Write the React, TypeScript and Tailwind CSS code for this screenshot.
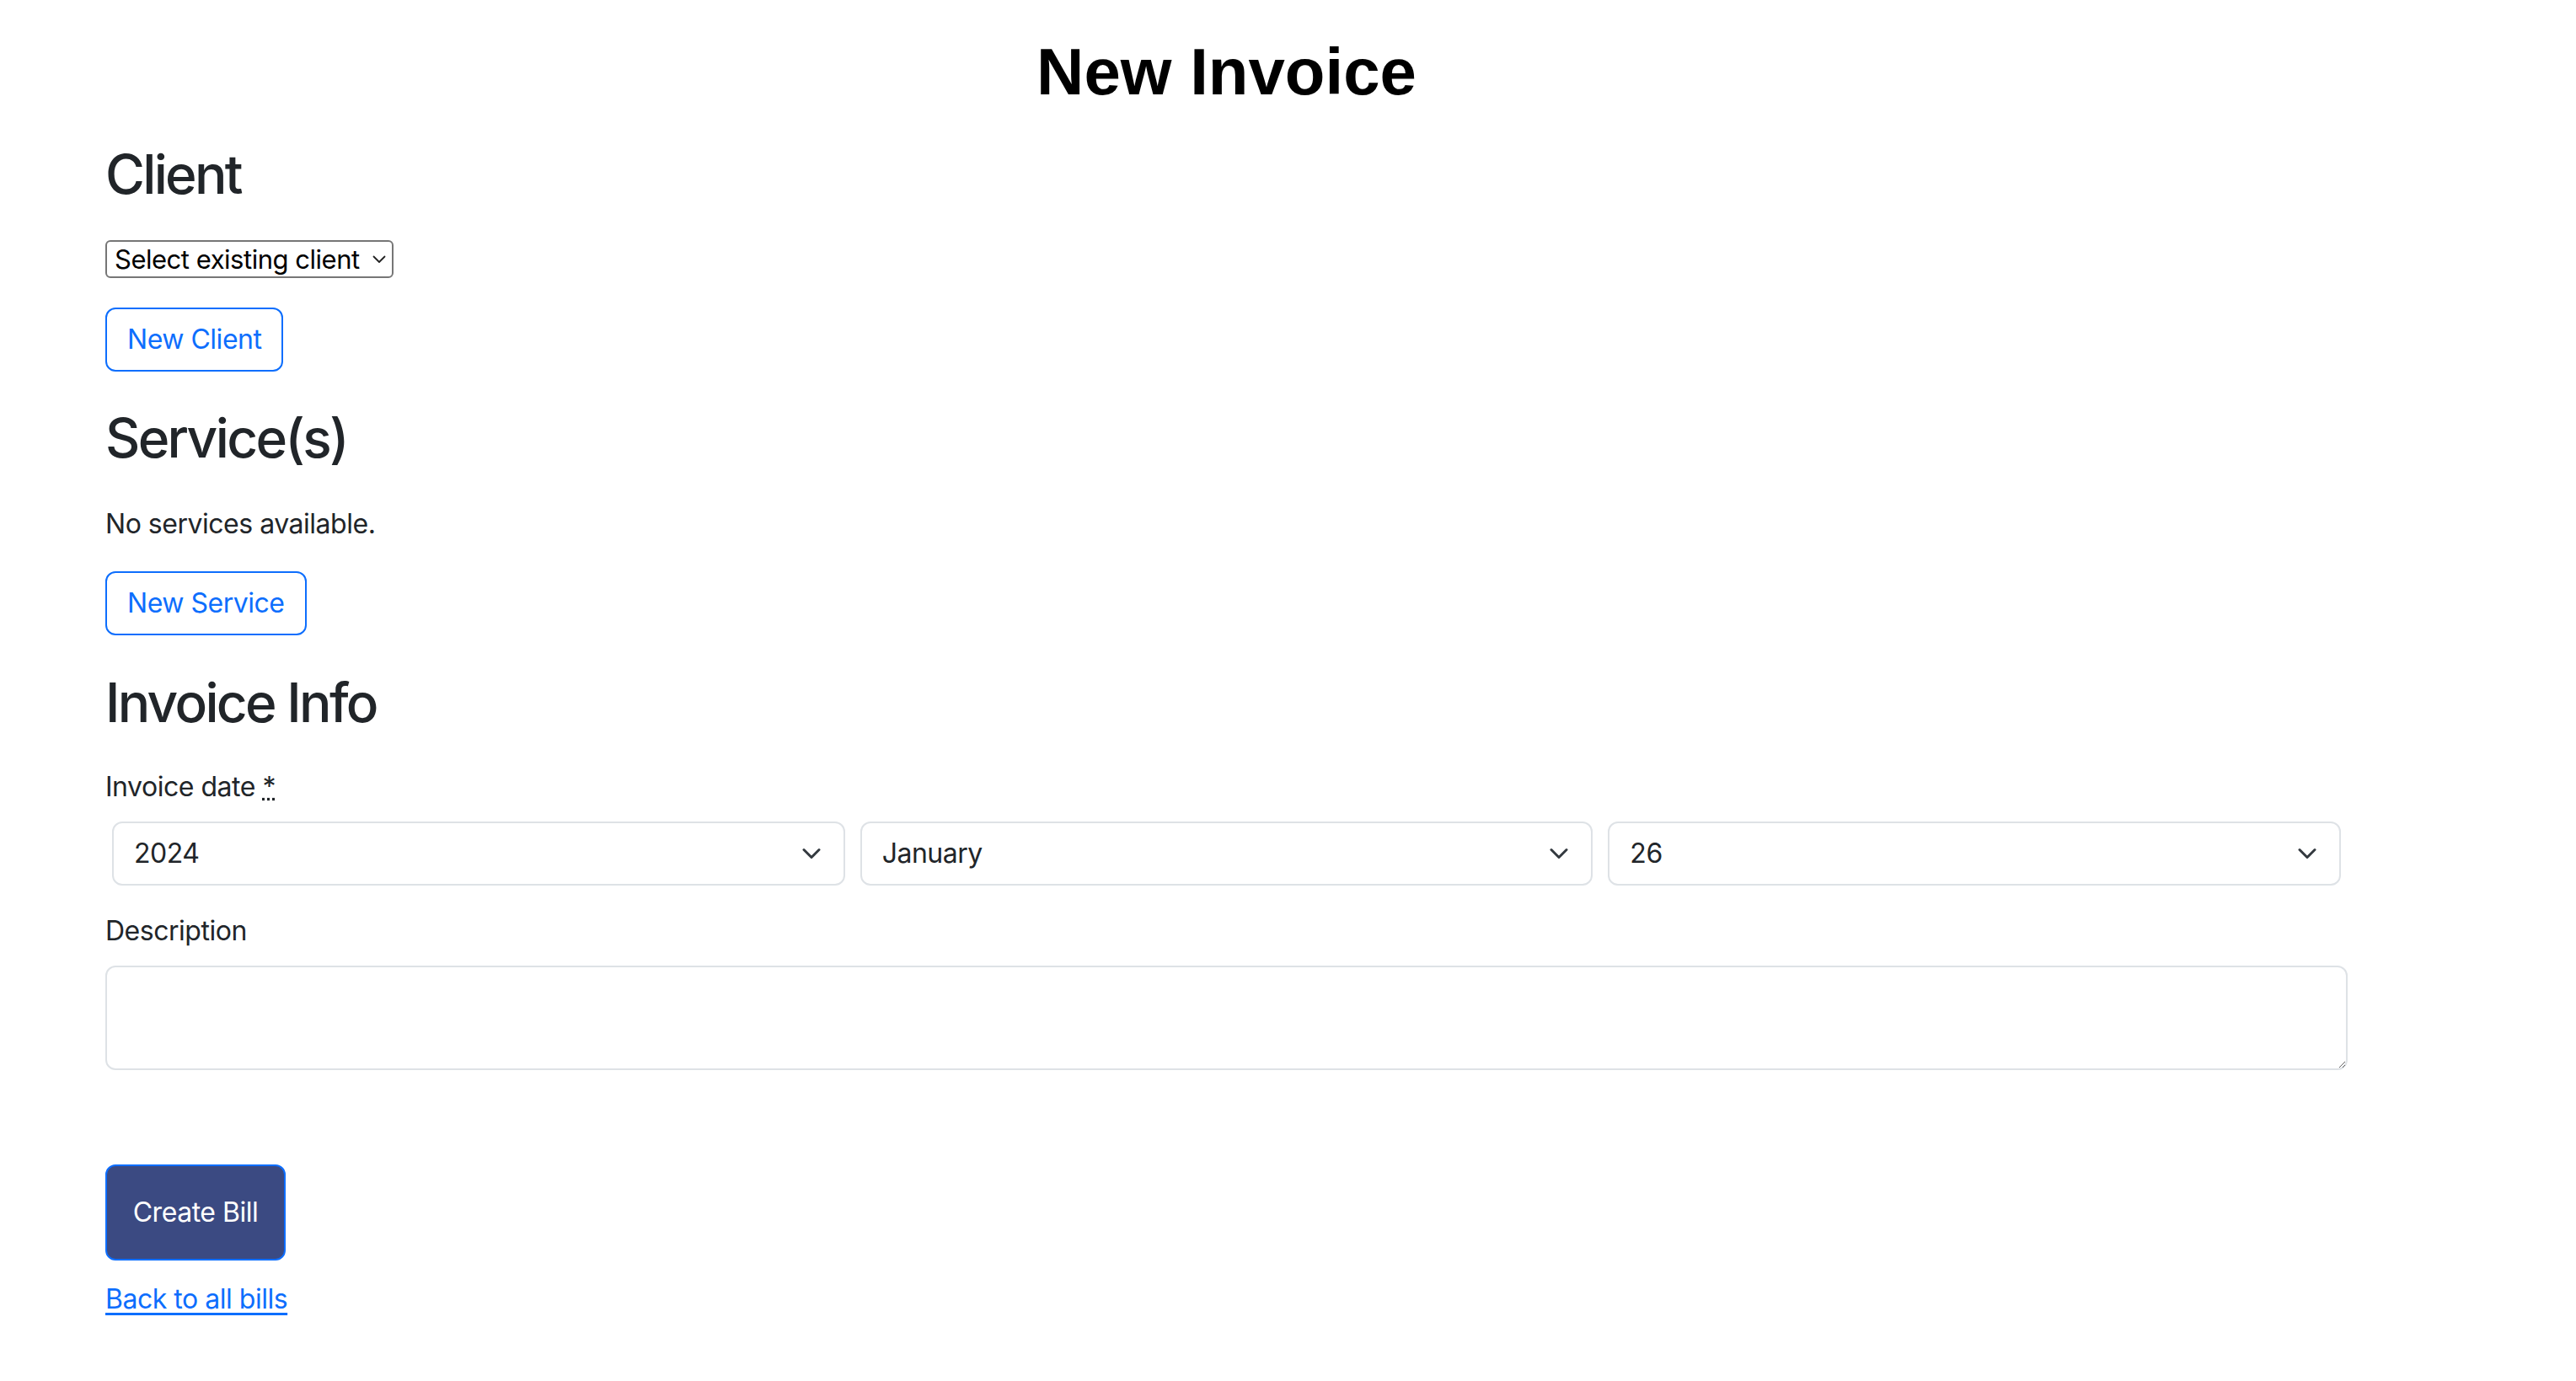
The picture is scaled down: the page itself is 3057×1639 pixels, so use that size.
import { useState } from "react";

const Chevron: React.FC<{ className?: string }> = ({ className }) => (
    <svg className={className} width="24" height="24" viewBox="0 0 16 16" fill="none">
        <path d="m2 5 6 6 6-6" stroke="#343a40" strokeWidth="2" strokeLinecap="round" strokeLinejoin="round" />
    </svg>
);

const DateSelect: React.FC<{ value: string; options: string[]; onChange: (v: string) => void }> = ({ value, options, onChange }) => (
    <div className="relative flex-1">
        <select
            value={value}
            onChange={(e) => onChange(e.target.value)}
            className="w-full h-[76px] appearance-none rounded-[12px] border-2 border-[#dee2e6] bg-white pl-[24px] pr-[72px] text-[32px] leading-[48px] text-[#212529] outline-none"
        >
            {options.map((o) => (
                <option key={o} value={o}>{o}</option>
            ))}
        </select>
        <Chevron className="pointer-events-none absolute right-[28px] top-1/2 -translate-y-1/2" />
    </div>
);

const months = ["January", "February", "March", "April", "May", "June", "July", "August", "September", "October", "November", "December"];
const years = ["2019", "2020", "2021", "2022", "2023", "2024", "2025", "2026", "2027", "2028", "2029"];
const days = Array.from({ length: 31 }, (_, i) => String(i + 1));

export default function App() {
    const [year, setYear] = useState("2024");
    const [month, setMonth] = useState("January");
    const [day, setDay] = useState("26");
    const [description, setDescription] = useState("");

    return (
        <div className="min-h-screen bg-white font-['Inter','Noto_Sans',sans-serif] tracking-[-0.03em] text-[#212529]">
            <div className="ml-[125px] w-[2661px] pt-[37px] pb-[60px]">
                <h1 className="text-center font-['Liberation_Sans',Arial,sans-serif] text-[78px] font-bold leading-[96px] tracking-normal text-black">
                    New Invoice
                </h1>

                {/* Client */}
                <h2 className="mt-[35px] text-[64px] font-medium leading-[77px] tracking-[-0.042em]">Client</h2>
                <div className="relative mt-[40px] w-[342px]">
                    <select className="h-[45px] w-full appearance-none rounded-[6px] border-2 border-[#767676] bg-white pl-[9px] pr-[30px] text-[31px] leading-[40px] text-black outline-none">
                        <option>Select existing client</option>
                    </select>
                    <svg className="pointer-events-none absolute right-[9px] top-[18px]" width="16" height="10" viewBox="0 0 16 10" fill="none">
                        <path d="M1.5 1.5 8 8l6.5-6.5" stroke="#222" strokeWidth="1.8" strokeLinecap="round" strokeLinejoin="round" />
                    </svg>
                </div>
                <button className="mt-[35px] block rounded-[12px] border-2 border-[#0d6efd] bg-white px-[24px] py-[12px] text-[32px] leading-[48px] text-[#0d6efd]">
                    New Client
                </button>

                {/* Services */}
                <h2 className="mt-[40px] text-[64px] font-medium leading-[77px] tracking-[-0.042em]">Service(s)</h2>
                <p className="mt-[40px] text-[32px] leading-[48px]">No services available.</p>
                <button className="mt-[32px] block rounded-[12px] border-2 border-[#0d6efd] bg-white px-[24px] py-[12px] text-[32px] leading-[48px] text-[#0d6efd]">
                    New Service
                </button>

                {/* Invoice info */}
                <h2 className="mt-[41px] text-[64px] font-medium leading-[77px] tracking-[-0.042em]">Invoice Info</h2>
                <label className="mt-[38px] block text-[32px] leading-[48px]">
                    Invoice date <abbr title="required">*</abbr>
                </label>
                <div className="mt-[17px] flex gap-[18px] px-[8px]">
                    <DateSelect value={year} options={years} onChange={setYear} />
                    <DateSelect value={month} options={months} onChange={setMonth} />
                    <DateSelect value={day} options={days} onChange={setDay} />
                </div>

                <label className="mt-[30px] block text-[32px] leading-[48px]">Description</label>
                <textarea
                    value={description}
                    onChange={(e) => setDescription(e.target.value)}
                    className="mt-[17px] block h-[124px] w-full rounded-[12px] border-2 border-[#dee2e6] px-[24px] py-[12px] text-[32px] outline-none"
                />

                <button className="mt-[112px] flex h-[114px] w-[214px] items-center justify-center rounded-[12px] border-2 border-[#0d6efd] bg-[#3b4a82] text-[32px] leading-[48px] text-white">
                    Create Bill
                </button>
                <a href="#" className="mt-[22px] inline-block text-[32px] leading-[48px] text-[#0d6efd] underline underline-offset-[5px]">
                    Back to all bills
                </a>
            </div>
        </div>
    );
}
